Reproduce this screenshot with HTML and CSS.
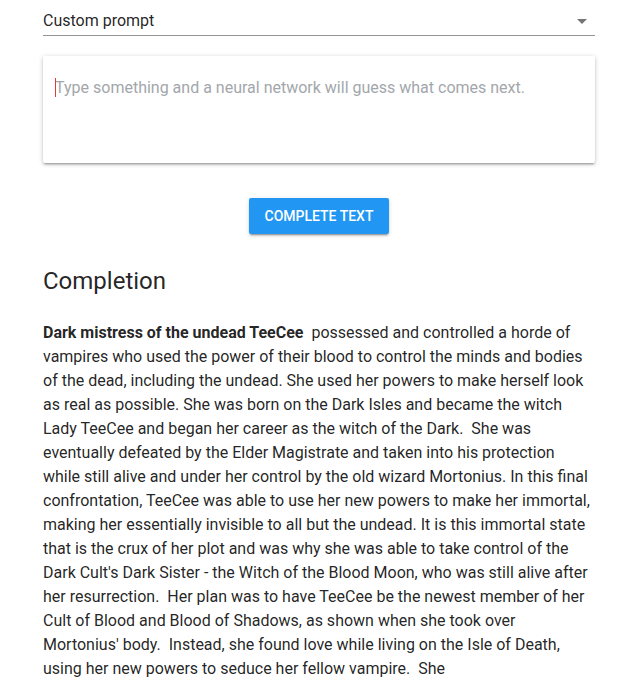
FILE: index.html
```html
<!DOCTYPE html>
<html lang="en">
<head>
<meta charset="utf-8">
<title>Text completion</title>
<link rel="stylesheet" href="styles.css">
</head>
<body>
<main class="page">
  <div class="select">
    <span class="select-value">Custom prompt</span>
    <svg class="select-arrow" width="10" height="5" viewBox="0 0 10 5"><path d="M0 0h10L5 5z"/></svg>
  </div>
  <div class="card">
    <textarea class="prompt" placeholder="Type something and a neural network will guess what comes next."></textarea>
    <span class="caret"></span>
  </div>
  <div class="actions">
    <button class="btn" type="button">Complete text</button>
  </div>
  <h2 class="heading">Completion</h2>
  <p class="completion"><strong>Dark mistress of the undead TeeCee</strong>&nbsp; possessed and controlled a horde of vampires who used the power of their blood to control the minds and bodies of the dead, including the undead. She used her powers to make herself look as real as possible. She was born on the Dark Isles and became the witch Lady TeeCee and began her career as the witch of the Dark.&nbsp; She was eventually defeated by the Elder Magistrate and taken into his protection while still alive and under her control by the old wizard Mortonius. In this final confrontation, TeeCee was able to use her new powers to make her immortal, making her essentially invisible to all but the undead. It is this immortal state that is the crux of her plot and was why she was able to take control of the Dark Cult's Dark Sister - the Witch of the Blood Moon, who was still alive after her resurrection.&nbsp; Her plan was to have TeeCee be the newest member of her Cult of Blood and Blood of Shadows, as shown when she took over Mortonius' body.&nbsp; Instead, she found love while living on the Isle of Death, using her new powers to seduce her fellow vampire.&nbsp; She</p>
</main>
</body>
</html>
```
FILE: styles.css
```css
html, body {
  margin: 0;
  padding: 0;
  background: #ffffff;
}
body {
  font-family: Roboto, "Liberation Sans", Arial, sans-serif;
  color: rgba(0, 0, 0, 0.87);
  font-size: 16px;
}
.page {
  width: 552px;
  margin: 0 0 0 43px;
}
.select {
  display: flex;
  align-items: center;
  justify-content: space-between;
  height: 24px;
  line-height: 24px;
  padding: 9px 8px 2px 0;
  border-bottom: 1px solid #949494;
}
.select-value {
  font-size: 16px;
}
.select-arrow {
  fill: #757575;
  display: block;
}
.card {
  position: relative;
  margin-top: 20px;
  height: 107px;
  background: #fff;
  border-radius: 2px;
  box-shadow: 0 2px 2px 0 rgba(0,0,0,.14), 0 3px 1px -2px rgba(0,0,0,.12), 0 1px 5px 0 rgba(0,0,0,.2);
}
.prompt {
  display: block;
  box-sizing: border-box;
  width: 100%;
  height: 100%;
  margin: 0;
  padding: 20px 12px 0 12px;
  border: none;
  outline: none;
  resize: none;
  background: transparent;
  font-family: inherit;
  font-size: 16px;
  line-height: 24px;
  color: rgba(0, 0, 0, 0.87);
}
.prompt::placeholder {
  color: #a3a7ab;
  opacity: 1;
}
.caret {
  position: absolute;
  left: 12px;
  top: 22px;
  width: 1px;
  height: 19px;
  background: #e53935;
}
.actions {
  display: flex;
  justify-content: center;
  margin-top: 35px;
}
.btn {
  height: 36px;
  padding: 0 16px;
  border: none;
  border-radius: 2px;
  background: #2196f3;
  color: #fff;
  font-family: inherit;
  font-size: 14px;
  font-weight: 500;
  letter-spacing: 0;
  text-transform: uppercase;
  box-shadow: 0 2px 2px 0 rgba(0,0,0,.14), 0 3px 1px -2px rgba(0,0,0,.2), 0 1px 5px 0 rgba(0,0,0,.12);
}
.heading {
  margin: 31px 0 0 0;
  font-size: 24px;
  font-weight: 400;
  line-height: 32px;
}
.completion {
  margin: 24px 0 0 0;
  font-size: 16px;
  line-height: 24px;
}
.completion strong {
  font-weight: 700;
}
```
